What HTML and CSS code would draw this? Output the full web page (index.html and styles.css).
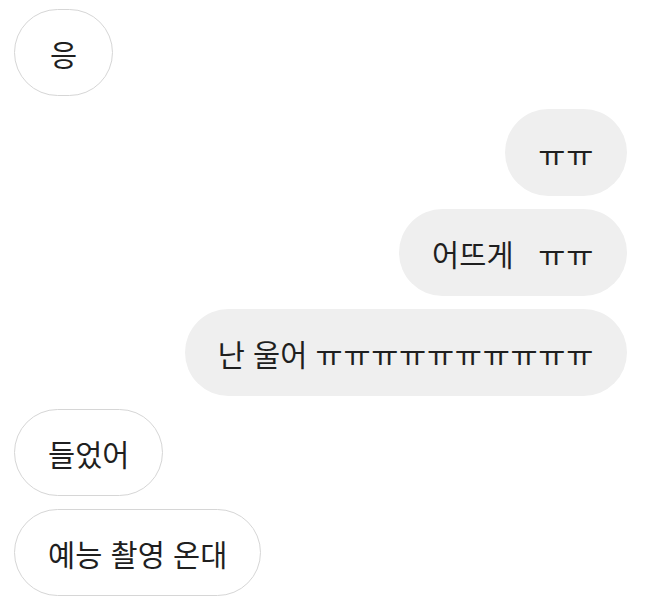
FILE: index.html
```html
<!DOCTYPE html>
<html lang="ko">
<head>
    <meta charset="UTF-8">
    <meta name="viewport" content="width=device-width, initial-scale=1.0">
    <title>Chat</title>
    <link rel="stylesheet" href="styles.css">
</head>
<body>
    <div class="chat">
        <div class="msg in">응</div>
        <div class="msg out"><span class="cry">ㅠㅠ</span></div>
        <div class="msg out">어뜨게   <span class="cry">ㅠㅠ</span></div>
        <div class="msg out">난 울어 <span class="cry">ㅠㅠㅠㅠㅠㅠㅠㅠㅠㅠ</span></div>
        <div class="msg in">들었어</div>
        <div class="msg in">예능 촬영 온대</div>
    </div>
</body>
</html>
```

FILE: styles.css
```css
body {
    margin: 0;
    background-color: #fff;
    font-family: "Noto Sans CJK KR", "Noto Sans", sans-serif;
    color: #1f1f1f;
}
.chat {
    display: flex;
    flex-direction: column;
    gap: 13px;
    padding: 9px 24px 0 14px;
}
.msg {
    box-sizing: border-box;
    height: 87px;
    min-width: 99px;
    display: flex;
    align-items: center;
    justify-content: center;
    padding: 0 33px;
    border-radius: 44px;
    font-size: 29.5px;
    white-space: pre;
}
.in {
    align-self: flex-start;
    border: 1.5px solid #d6d6d6;
    background-color: #fff;
}
.out {
    align-self: flex-end;
    background-color: #efefef;
}
.cry {
    letter-spacing: 0.7px;
}
```
